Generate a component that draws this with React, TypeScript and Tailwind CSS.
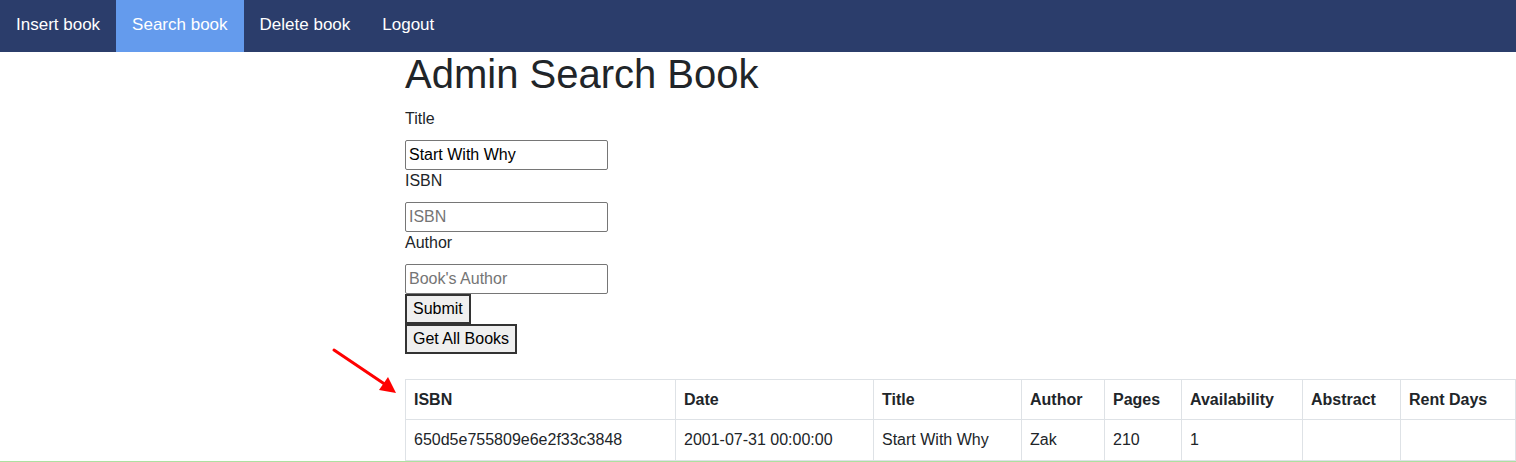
import type { ReactNode } from "react";

const navItems = ["Insert book", "Search book", "Delete book", "Logout"];

const columns = [
  { label: "ISBN", width: 270 },
  { label: "Date", width: 198 },
  { label: "Title", width: 148 },
  { label: "Author", width: 83 },
  { label: "Pages", width: 77 },
  { label: "Availability", width: 121 },
  { label: "Abstract", width: 98 },
  { label: "Rent Days", width: 115 },
];

const rows = [["650d5e755809e6e2f33c3848", "2001-07-31 00:00:00", "Start With Why", "Zak", "210", "1", "", ""]];

function Field({ label, children }: { label: string; children: ReactNode }) {
  return (
    <div>
      <label className="mb-[10px] block leading-[22px]">{label}</label>
      {children}
    </div>
  );
}

export default function App() {
  return (
    <div className="relative flex h-[462px] flex-col overflow-hidden bg-white text-[16px] text-[#212529]" style={{ fontFamily: '"Liberation Sans", Arial, sans-serif' }}>
      <nav className="flex h-[52px] bg-[#2b3d6b]">
        {navItems.map((item) => (
          <a key={item} className={`px-4 text-[17px] leading-[50px] text-white ${item === "Search book" ? "bg-[#649bed]" : ""}`}>
            {item}
          </a>
        ))}
      </nav>

      <main className="flex-1 pl-[405px]">
        <h1 className="mb-[12px] text-[40px] leading-[44px]">Admin Search Book</h1>
        <form className="flex flex-col items-start" onSubmit={(e) => e.preventDefault()}>
          <Field label="Title">
            <input className="block h-[30px] w-[203px] rounded-[2px] border border-[#767676] px-[3px] text-[16px] text-black outline-none" defaultValue="Start With Why" />
          </Field>
          <Field label="ISBN">
            <input className="block h-[30px] w-[203px] rounded-[2px] border border-[#767676] px-[3px] text-[16px] outline-none placeholder:text-[#757575]" placeholder="ISBN" />
          </Field>
          <Field label="Author">
            <input className="block h-[30px] w-[203px] rounded-[2px] border border-[#767676] px-[3px] text-[16px] outline-none placeholder:text-[#757575]" placeholder="Book's Author" />
          </Field>
          <button className="block h-[30px] border-2 border-[#333] bg-[#efefef] px-[6px] text-black">Submit</button>
          <button type="button" className="block h-[30px] border-2 border-[#333] bg-[#efefef] px-[6px] text-black">Get All Books</button>
        </form>

        <table className="mt-[25px] w-[1110px] table-fixed border-collapse">
          <colgroup>
            {columns.map((c) => (
              <col key={c.label} style={{ width: c.width }} />
            ))}
          </colgroup>
          <thead>
            <tr>
              {columns.map((c) => (
                <th key={c.label} className="h-[40px] border border-[#dee2e6] px-2 text-left font-bold leading-6">
                  {c.label}
                </th>
              ))}
            </tr>
          </thead>
          <tbody>
            {rows.map((row, i) => (
              <tr key={i}>
                {row.map((cell, j) => (
                  <td key={j} className="h-[41px] border border-[#dee2e6] px-2 leading-6">
                    {cell}
                  </td>
                ))}
              </tr>
            ))}
          </tbody>
        </table>
      </main>

      <div className="h-px bg-[#ade0a0]" />

      <svg className="pointer-events-none absolute left-[330px] top-[345px]" width="70" height="52" viewBox="0 0 70 52">
        <line x1="4" y1="5" x2="56" y2="40" stroke="#ff0000" strokeWidth="3" strokeLinecap="round" />
        <polygon points="66,48 49,45 58,32" fill="#ff0000" />
      </svg>
    </div>
  );
}
